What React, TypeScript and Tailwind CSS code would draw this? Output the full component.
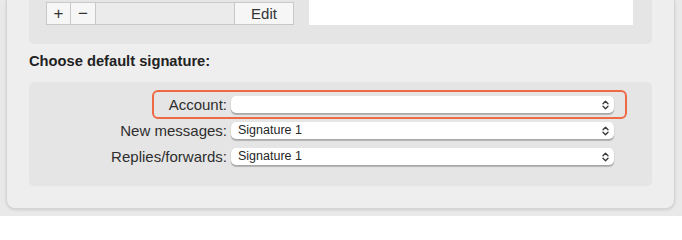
import React from "react";

function Chevrons() {
  return (
    <svg width="7" height="10" viewBox="0 0 7 10" className="shrink-0">
      <path d="M1 3.8 L3.5 1.3 L6 3.8" fill="none" stroke="#3a3a3a" strokeWidth="1.4" strokeLinecap="round" strokeLinejoin="round" />
      <path d="M1 6.2 L3.5 8.7 L6 6.2" fill="none" stroke="#3a3a3a" strokeWidth="1.4" strokeLinecap="round" strokeLinejoin="round" />
    </svg>
  );
}

function Popup({ value }: { value?: string }) {
  return (
    <div className="flex h-[17px] w-[383px] items-center justify-between rounded-[5px] bg-white pl-[7px] pr-[5px] text-[12.5px] leading-none text-[#262626] shadow-[0_0.5px_0_0.5px_rgba(0,0,0,0.06),0_1.5px_1px_rgba(0,0,0,0.22)]">
      <span>{value}</span>
      <Chevrons />
    </div>
  );
}

function Row({ label, value }: { label: string; value?: string }) {
  return (
    <div className="flex items-center">
      <span className="w-[202px] pr-[4px] text-right text-[15px] leading-none text-[#2e2e2e]">{label}</span>
      <Popup value={value} />
    </div>
  );
}

export default function App() {
  return (
    <div
      className="h-[216px] w-[682px] overflow-hidden bg-[#e9e9e9] pl-[6px] pr-[7px]"
      style={{ fontFamily: '"Liberation Sans", Arial, sans-serif' }}
    >
      <div className="relative h-[209px] rounded-b-[9px] border-x border-b border-[#d4d4d4] bg-[#efeeee] shadow-[0_1px_3px_rgba(0,0,0,0.12)]">
        {/* signatures list panel */}
        <div className="mx-[22px] flex h-[44px] rounded-b-[5px] bg-[#e5e5e5] pl-[17px] pr-[19px]">
          <div className="mt-[2px] flex h-[23px] text-[#333]">
            <button className="flex w-[25px] items-center justify-center border border-[#c9c9c9] bg-[#f6f6f6] text-[17px] leading-none">+</button>
            <button className="flex w-[25px] items-center justify-center border border-l-0 border-[#c9c9c9] bg-[#f6f6f6] text-[17px] leading-none">−</button>
            <div className="w-[138px] border-y border-[#c9c9c9] bg-[#ebebeb]" />
            <button className="flex w-[60px] items-center justify-center border border-[#c9c9c9] bg-[#f6f6f6] text-[15px] leading-none">Edit</button>
          </div>
          <div className="ml-auto h-[25px] w-[324px] bg-white" />
        </div>

        <div className="ml-[22px] mt-[10px] text-[14.7px] font-bold leading-[15px] text-[#222]">Choose default signature:</div>

        {/* default signature panel */}
        <div className="relative mx-[22px] mt-[13px] flex h-[104px] flex-col gap-[9px] rounded-[5px] bg-[#e5e5e5] pt-[14px]">
          <Row label="Account:" />
          <Row label="New messages:" value="Signature 1" />
          <Row label="Replies/forwards:" value="Signature 1" />
          <div className="absolute left-[123px] top-[8px] h-[29px] w-[475px] rounded-[6px] border-2 border-[#ee6a45]" />
        </div>
      </div>
    </div>
  );
}
